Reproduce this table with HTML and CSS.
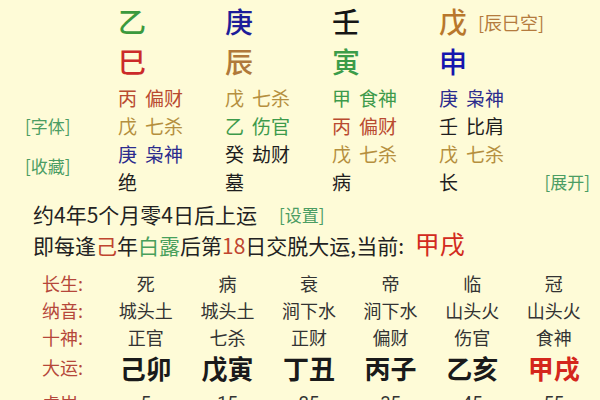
FILE: index.html
```html
<!DOCTYPE html>
<html lang="zh-CN">
<head>
<meta charset="utf-8">
<link rel="stylesheet" href="styles.css">
</head>
<body>
<div class="page">
  <div class="pillars">
    <div class="stem c1 green">乙</div>
    <div class="stem c2 blue">庚</div>
    <div class="stem c3 black">壬</div>
    <div class="stem c4 brown">戊<span class="kong">[辰巳空]</span></div>

    <div class="branch c1 red">巳</div>
    <div class="branch c2 brown2">辰</div>
    <div class="branch c3 green2">寅</div>
    <div class="branch c4 blue2">申</div>

    <div class="side">
      <span class="link">[字体]</span>
      <span class="link">[收藏]</span>
    </div>

    <div class="hid c1 r3 hred"><span>丙</span><span>偏财</span></div>
    <div class="hid c2 r3 hgold"><span>戊</span><span>七杀</span></div>
    <div class="hid c3 r3 hgreen"><span>甲</span><span>食神</span></div>
    <div class="hid c4 r3 hblue"><span>庚</span><span>枭神</span></div>

    <div class="hid c1 r4 hgold"><span>戊</span><span>七杀</span></div>
    <div class="hid c2 r4 hgreen"><span>乙</span><span>伤官</span></div>
    <div class="hid c3 r4 hred"><span>丙</span><span>偏财</span></div>
    <div class="hid c4 r4 hblack"><span>壬</span><span>比肩</span></div>

    <div class="hid c1 r5 hblue"><span>庚</span><span>枭神</span></div>
    <div class="hid c2 r5 hblack"><span>癸</span><span>劫财</span></div>
    <div class="hid c3 r5 hgold"><span>戊</span><span>七杀</span></div>
    <div class="hid c4 r5 hgold"><span>戊</span><span>七杀</span></div>

    <div class="hid c1 r6 hblack"><span>绝</span></div>
    <div class="hid c2 r6 hblack"><span>墓</span></div>
    <div class="hid c3 r6 hblack"><span>病</span></div>
    <div class="hid c4 r6 hblack split"><span>长</span><span class="link">[展开]</span></div>
  </div>

  <div class="info">
    <div class="line">约4年5个月零4日后上运<span class="link set">[设置]</span></div>
    <div class="line">即每逢<span class="rb">己</span>年<span class="lg">白露</span>后第<span class="rb">18</span>日交脱大运,当前: <span class="cur">甲戌</span></div>
  </div>

  <div class="yun">
    <div class="lbl">长生:</div>
    <div class="cell">死</div><div class="cell">病</div><div class="cell">衰</div><div class="cell">帝</div><div class="cell">临</div><div class="cell">冠</div>

    <div class="lbl">纳音:</div>
    <div class="cell">城头土</div><div class="cell">城头土</div><div class="cell">涧下水</div><div class="cell">涧下水</div><div class="cell">山头火</div><div class="cell">山头火</div>

    <div class="lbl">十神:</div>
    <div class="cell">正官</div><div class="cell">七杀</div><div class="cell">正财</div><div class="cell">偏财</div><div class="cell">伤官</div><div class="cell">食神</div>

    <div class="lbl">大运:</div>
    <div class="cell big">己卯</div><div class="cell big">戊寅</div><div class="cell big">丁丑</div><div class="cell big">丙子</div><div class="cell big">乙亥</div><div class="cell big now">甲戌</div>

    <div class="lbl">虚岁:</div>
    <div class="cell num">5</div><div class="cell num">15</div><div class="cell num">25</div><div class="cell num">35</div><div class="cell num">45</div><div class="cell num">55</div>
  </div>
</div>
</body>
</html>
```

FILE: styles.css
```css
html, body {
  margin: 0;
  padding: 0;
  background: #fefbd7;
  overflow: hidden;
}

.page {
  width: 600px;
  height: 400px;
  font-family: "Noto Sans CJK SC", "Noto Sans", sans-serif;
  color: #222;
}

.pillars {
  display: grid;
  grid-template-columns: 118px 107px 107px 107px 151px;
  grid-template-rows: 40px 43px 28px 28px 28px 28px;
  padding-top: 1px;
}

.c1 { grid-column: 2; }
.c2 { grid-column: 3; }
.c3 { grid-column: 4; }
.c4 { grid-column: 5; }
.r3 { grid-row: 3; }
.r4 { grid-row: 4; }
.r5 { grid-row: 5; }
.r6 { grid-row: 6; }

.stem, .branch {
  font-size: 28px;
  font-weight: 500;
  line-height: 40px;
}
.stem { grid-row: 1; }
.branch { grid-row: 2; }

.green { color: #3b993d; }
.blue { color: #1d1d99; }
.black { color: #151515; }
.brown { color: #b8772c; }
.red { color: #cb2a2a; }
.brown2 { color: #b0793a; }
.green2 { color: #3c9c49; }
.blue2 { color: #1515ae; }

.kong {
  font-size: 18px;
  font-weight: 400;
  color: #b47b3e;
  margin-left: 11px;
  vertical-align: 3px;
}

.side {
  grid-column: 1;
  grid-row: 3 / 7;
  display: flex;
  flex-direction: column;
  gap: 16px;
  padding-left: 25px;
  padding-top: 30px;
}
.side .link {
  line-height: 24px;
}

.link {
  color: #4b9d63;
  font-size: 17px;
}

.hid {
  display: flex;
  gap: 8px;
  font-size: 19px;
  line-height: 28px;
}
.hid.split {
  justify-content: space-between;
}

.hred { color: #b94a30; }
.hgold { color: #b58f3e; }
.hgreen { color: #3d9a4b; }
.hblue { color: #2b2b8d; }
.hblack { color: #1e1e1e; }

.info {
  padding-left: 33px;
  margin-top: 4px;
  font-size: 21px;
}
.line {
  line-height: 29px;
  white-space: nowrap;
}
.set {
  font-size: 17px;
  margin-left: 22px;
  vertical-align: 1px;
}
.rb { color: #c0452f; }
.lg { color: #48a05c; }
.cur {
  color: #d22a20;
  font-size: 25px;
  margin-left: 6px;
}

.yun {
  display: grid;
  grid-template-columns: 63px repeat(6, 81.6px);
  grid-template-rows: 27px 27px 27px 34px 37px;
  padding-left: 42px;
  margin-top: 9px;
}
.lbl {
  color: #b5473a;
  font-size: 18px;
  display: flex;
  align-items: center;
}
.cell {
  font-size: 18px;
  color: #333;
  display: flex;
  align-items: center;
  justify-content: center;
}
.cell.big {
  font-size: 26px;
  font-weight: bold;
  color: #1a1a1a;
}
.cell.now {
  color: #d4261c;
}
.cell.num {
  font-family: "Roboto", "Noto Sans", sans-serif;
}
```
